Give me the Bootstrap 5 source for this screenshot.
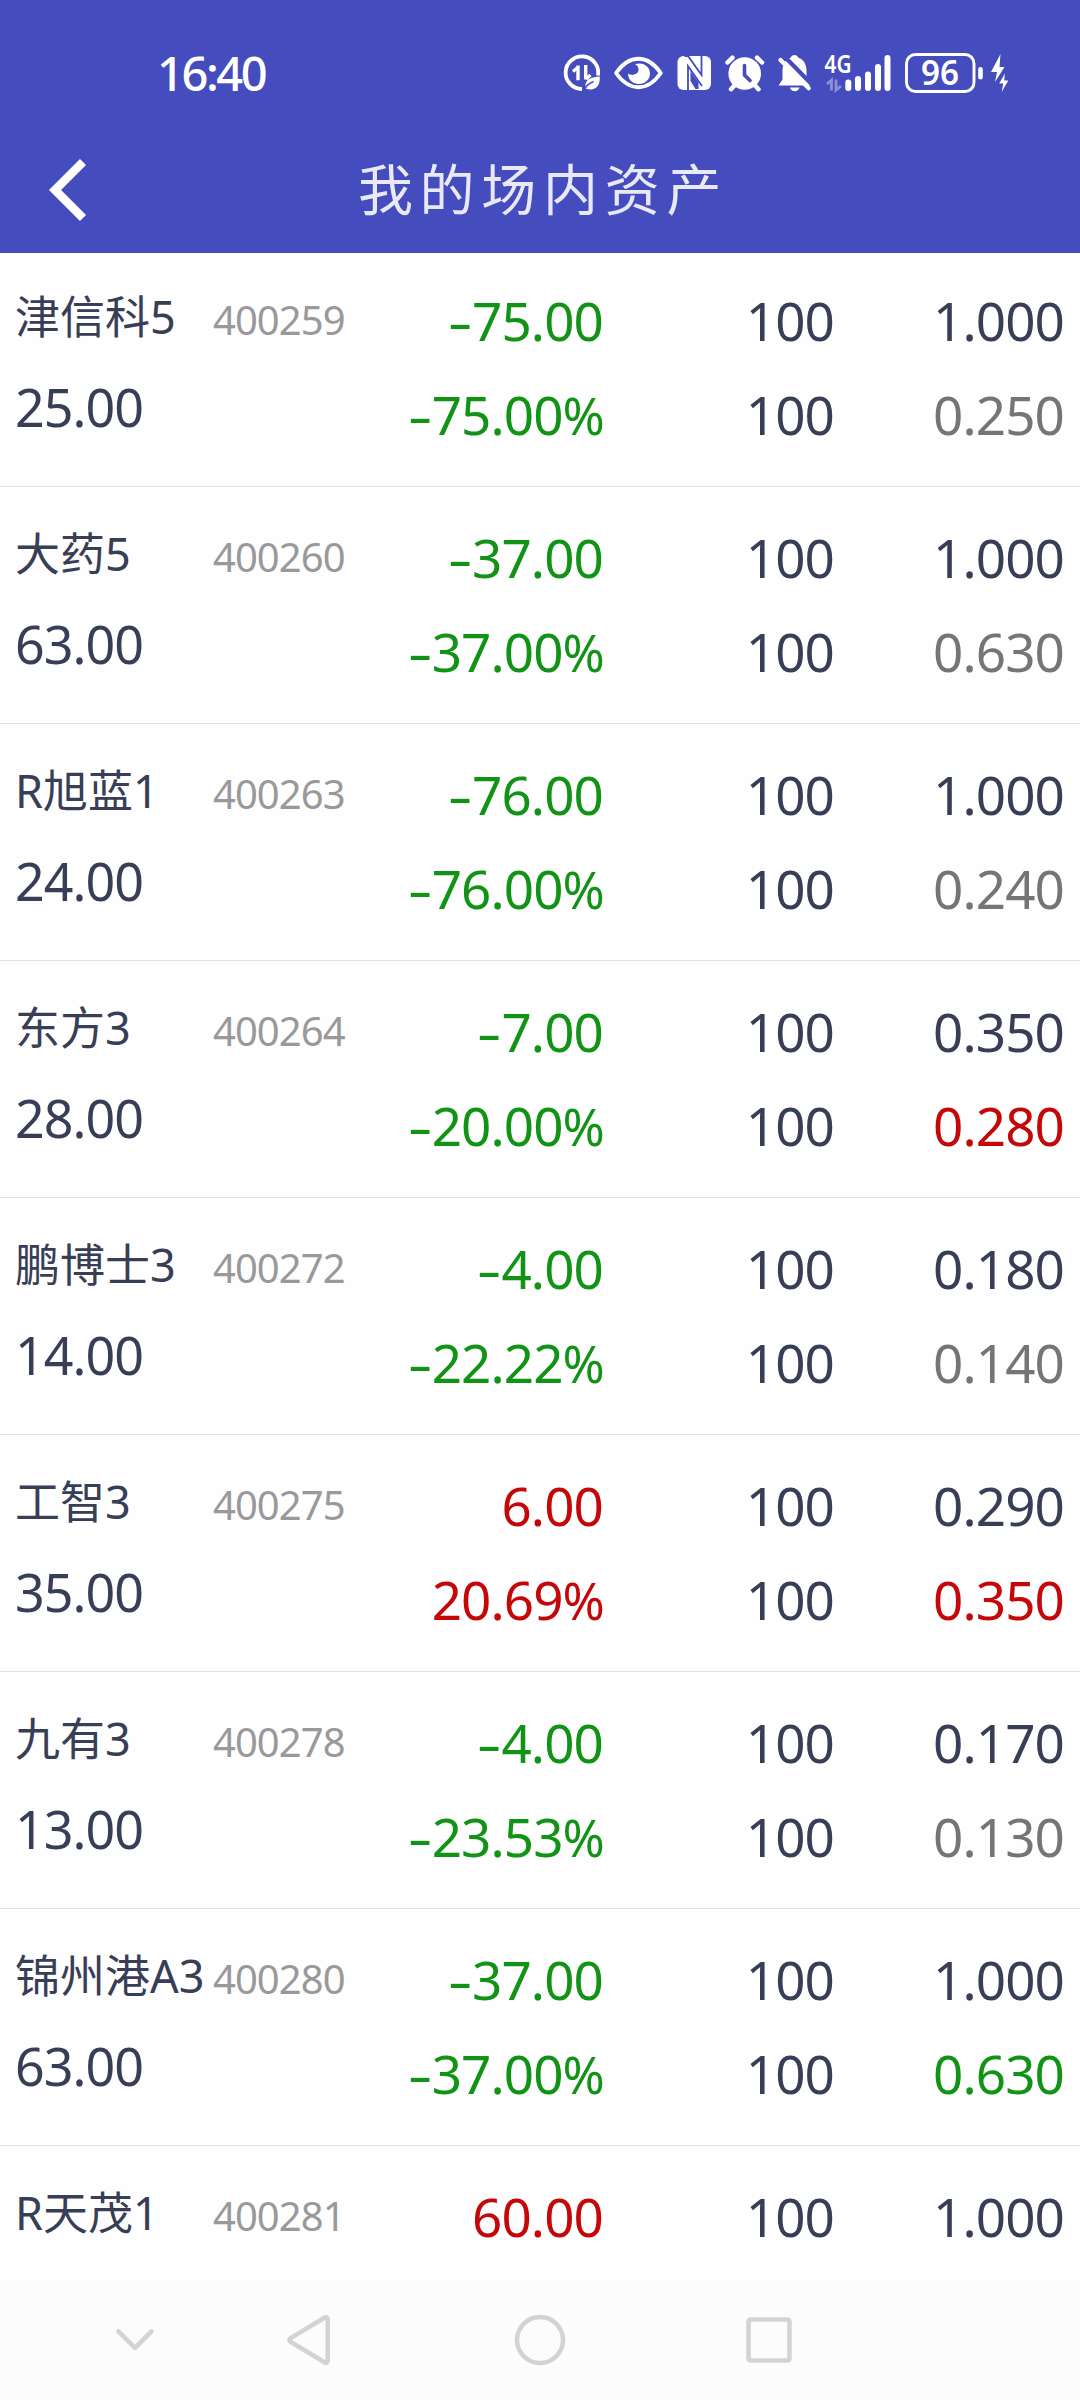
<!DOCTYPE html>
<html lang="zh-CN">
<head>
<meta charset="utf-8">
<meta name="viewport" content="width=device-width, initial-scale=1">
<title>我的场内资产</title>
<link href="https://cdn.jsdelivr.net/npm/bootstrap@5.3.0/dist/css/bootstrap.min.css" rel="stylesheet">
<style>
  body { font-family: "Noto Sans", "Noto Sans CJK SC", sans-serif; color: #383e55; background: #fefefe; }
  .screen { width: 1080px; height: 2400px; }
  .topbar { height: 253px; background: #444cbe; z-index: 1; }
  .status { height: 96px; padding: 0 66px 0 157px; }
  .clock { font-size: 47px; font-weight: 500; letter-spacing: -2.4px; line-height: 96px; margin-top: 25px; height: 71px; }
  .icons { height: 56px; margin-top: 40px; }
  .titlebar { height: 157px; padding-top: 30px; }
  .back { width: 120px; }
  .title { font-family: "Noto Sans CJK SC", sans-serif; font-size: 55px; letter-spacing: 6.7px; color: #e9e9f6; line-height: 120px; padding-left: 6px; margin-top: -7px !important; }
  .holdings { margin-top: -3px; }
  .holding { height: 237px; padding: 24px 15px 0 15px; border-bottom: 1px solid #e2e2e2; }
  .c-name { width: 335px; margin-top: -3px; }
  .c-gain { width: 253px; }
  .c-qty { width: 231px; }
  .c-price { width: 230px; }
  .n-row { height: 90px; line-height: 92px; }
  .n-name { width: 198px; font-size: 45px; white-space: nowrap; }
  .n-code { font-size: 40px; letter-spacing: -.95px; color: #999; margin-top: 3px; }
  .n-value { font-size: 52px; letter-spacing: -.95px; line-height: 92px; }
  .fig { font-size: 53px; letter-spacing: -.9px; line-height: 94px; height: 94px; }
  .down { color: #119316; }
  .up { color: #c4080a; }
  .flat { color: #757575; }
  .neg { display: inline-block; width: 25px; text-align: center; transform: scaleX(1.45); }
  .pct { font-size: .96em; margin-right: -1px; }
  .sysnav { height: 120px; background: #fcfcfc; z-index: 1; }
</style>
<script src="https://cdn.jsdelivr.net/npm/bootstrap@5.3.0/dist/js/bootstrap.bundle.min.js"></script>
</head>
<body>
<div class="screen d-flex flex-column overflow-hidden">
  <header class="topbar flex-shrink-0 position-relative text-white">
    <div class="status d-flex justify-content-between">
      <div class="clock">16:40</div>
      <div class="icons d-flex" aria-hidden="true">
        <!-- data saver -->
        <svg width="48" height="56" viewBox="560 40 48 56" fill="none" stroke="#fff">
          <path d="M598 75.500A16.300 16.300 0 1 0 582 89" stroke-width="3.800"/>
          <path d="M573 71.500l4.500-3.700M586 79l4.500-4" stroke-width="3.200"/>
          <path d="M578 65.500v14.800M585.700 65v14.500" stroke-width="3.400"/>
          <path d="M599.700 76.500c-8 .5-14.500 2.500-14.300 9.500 0 1 .3 2 .7 2.700 8.500 2.800 14.500-2 13.600-12.200z" fill="#fff" stroke="none"/>
          <path d="M583.500 91c2-4.500 5-7.500 10-9.500" stroke="#444cbe" stroke-width="1.600"/>
        </svg>
        <!-- eye comfort -->
        <svg width="62" height="56" viewBox="608 40 62 56">
          <path d="M616 73c13.500-19 31.500-19 44.800 0-13.300 19-31.300 19-44.800 0z" fill="none" stroke="#fff" stroke-width="3.800" stroke-linejoin="round"/>
          <path d="M635 64.300c8-2.800 15 2.200 15 9.200 0 6-5 10.500-11 10.500-6.500 0-11-4.500-11-10.500 3 2.500 9.500 1.700 10.500-3 .5-2.700-1-5-3.500-6.200z" fill="#fff"/>
        </svg>
        <!-- NFC -->
        <svg width="50" height="56" viewBox="670 40 50 56">
          <rect x="677.500" y="56" width="33.500" height="34" rx="6" fill="#fff"/>
          <path d="M684.500 56h3.500l13.500 19V56M688 90V66l14 20" fill="none" stroke="#444cbe" stroke-width="1.800"/>
          <path d="M690.500 71l8 11.500V89h-3l-5-8z" fill="#444cbe"/>
        </svg>
        <!-- alarm -->
        <svg width="52" height="56" viewBox="720 40 52 56" stroke-linecap="round">
          <circle cx="744.700" cy="73.500" r="16.300" fill="#fff"/>
          <path d="M727.500 62.500l5-4.800M762 62.500l-5-4.800M734 86l-3 3.200M755.500 86l3 3.200" stroke="#fff" stroke-width="4.500"/>
          <path d="M744.500 65.500V75l5.500 5.500" fill="none" stroke="#444cbe" stroke-width="3.600"/>
        </svg>
        <!-- muted bell -->
        <svg width="48" height="56" viewBox="772 40 48 56" stroke-linecap="round">
          <path d="M778.500 85.500l4-6V71c0-7.500 3.500-12 8.500-13.500 0-3.500 7-3.500 7 0 5 1.500 8.500 6 8.500 13.500v8l4 6.500z" fill="#fff"/>
          <path d="M790 87.500h9.500c-1 5-8.500 5-9.500 0z" fill="#fff"/>
          <path d="M784 56l27.500 28" stroke="#444cbe" stroke-width="4.200"/>
          <path d="M780.500 60l28.200 28.200" stroke="#fff" stroke-width="4.200"/>
        </svg>
        <!-- mobile signal -->
        <svg width="80" height="56" viewBox="820 40 80 56" fill="#fff">
          <text x="824.500" y="73" font-size="25" font-weight="600" textLength="27" lengthAdjust="spacingAndGlyphs">4G</text>
          <path d="M827 84l4.500-4v10.500M836 79.500V90l5-4" fill="none" stroke="#8b90d8" stroke-width="2.800"/>
          <g stroke="#fff" stroke-width="6" stroke-linecap="round">
            <path d="M848.300 82.500v5.500M858 79v9M868 74.500V88M878 67v21M887.500 58v30"/>
          </g>
        </svg>
        <!-- battery -->
        <svg width="86" height="56" viewBox="900 40 86 56" fill="#fff">
          <rect x="906.500" y="54.500" width="67.500" height="37" rx="9" fill="none" stroke="#fff" stroke-width="2.900"/>
          <rect x="978.200" y="67" width="4.600" height="12.500" rx="2.300"/>
          <text x="921" y="85" font-size="34" font-weight="600" textLength="38" lengthAdjust="spacingAndGlyphs">96</text>
        </svg>
        <!-- charging -->
        <svg width="28" height="56" viewBox="986 40 28 56" fill="#fff">
          <path d="M1000.500 54l-9.500 18h6l-2 10 9.500-15h-5z"/>
          <path d="M1004.800 73.500l-5.600 10h4l-1.500 8.500 6.600-11.500h-4z"/>
        </svg>
      </div>
    </div>
    <div class="titlebar d-flex align-items-center">
      <div class="back">
        <svg class="d-block" width="120" height="80" viewBox="0 150 120 80" aria-hidden="true"><path d="M83 162L55 190l28 28" fill="none" stroke="#fff" stroke-width="8.500"/></svg>
      </div>
      <h1 class="title flex-grow-1 text-center fw-normal m-0">我的场内资产</h1>
      <div class="back"></div>
    </div>
  </header>

  <main class="holdings flex-grow-1 overflow-hidden">
    <div class="holding d-flex">
      <div class="c-name"><div class="n-row d-flex"><span class="n-name">津信科5</span><span class="n-code">400259</span></div><div class="n-value">25.00</div></div>
      <div class="c-gain text-end down"><div class="fig"><span class="neg">-</span>75.00</div><div class="fig"><span class="neg">-</span>75.00<span class="pct">%</span></div></div>
      <div class="c-qty text-end"><div class="fig">100</div><div class="fig">100</div></div>
      <div class="c-price text-end"><div class="fig">1.000</div><div class="fig flat">0.250</div></div>
    </div>
    <div class="holding d-flex">
      <div class="c-name"><div class="n-row d-flex"><span class="n-name">大药5</span><span class="n-code">400260</span></div><div class="n-value">63.00</div></div>
      <div class="c-gain text-end down"><div class="fig"><span class="neg">-</span>37.00</div><div class="fig"><span class="neg">-</span>37.00<span class="pct">%</span></div></div>
      <div class="c-qty text-end"><div class="fig">100</div><div class="fig">100</div></div>
      <div class="c-price text-end"><div class="fig">1.000</div><div class="fig flat">0.630</div></div>
    </div>
    <div class="holding d-flex">
      <div class="c-name"><div class="n-row d-flex"><span class="n-name">R旭蓝1</span><span class="n-code">400263</span></div><div class="n-value">24.00</div></div>
      <div class="c-gain text-end down"><div class="fig"><span class="neg">-</span>76.00</div><div class="fig"><span class="neg">-</span>76.00<span class="pct">%</span></div></div>
      <div class="c-qty text-end"><div class="fig">100</div><div class="fig">100</div></div>
      <div class="c-price text-end"><div class="fig">1.000</div><div class="fig flat">0.240</div></div>
    </div>
    <div class="holding d-flex">
      <div class="c-name"><div class="n-row d-flex"><span class="n-name">东方3</span><span class="n-code">400264</span></div><div class="n-value">28.00</div></div>
      <div class="c-gain text-end down"><div class="fig"><span class="neg">-</span>7.00</div><div class="fig"><span class="neg">-</span>20.00<span class="pct">%</span></div></div>
      <div class="c-qty text-end"><div class="fig">100</div><div class="fig">100</div></div>
      <div class="c-price text-end"><div class="fig">0.350</div><div class="fig up">0.280</div></div>
    </div>
    <div class="holding d-flex">
      <div class="c-name"><div class="n-row d-flex"><span class="n-name">鹏博士3</span><span class="n-code">400272</span></div><div class="n-value">14.00</div></div>
      <div class="c-gain text-end down"><div class="fig"><span class="neg">-</span>4.00</div><div class="fig"><span class="neg">-</span>22.22<span class="pct">%</span></div></div>
      <div class="c-qty text-end"><div class="fig">100</div><div class="fig">100</div></div>
      <div class="c-price text-end"><div class="fig">0.180</div><div class="fig flat">0.140</div></div>
    </div>
    <div class="holding d-flex">
      <div class="c-name"><div class="n-row d-flex"><span class="n-name">工智3</span><span class="n-code">400275</span></div><div class="n-value">35.00</div></div>
      <div class="c-gain text-end up"><div class="fig">6.00</div><div class="fig">20.69<span class="pct">%</span></div></div>
      <div class="c-qty text-end"><div class="fig">100</div><div class="fig">100</div></div>
      <div class="c-price text-end"><div class="fig">0.290</div><div class="fig up">0.350</div></div>
    </div>
    <div class="holding d-flex">
      <div class="c-name"><div class="n-row d-flex"><span class="n-name">九有3</span><span class="n-code">400278</span></div><div class="n-value">13.00</div></div>
      <div class="c-gain text-end down"><div class="fig"><span class="neg">-</span>4.00</div><div class="fig"><span class="neg">-</span>23.53<span class="pct">%</span></div></div>
      <div class="c-qty text-end"><div class="fig">100</div><div class="fig">100</div></div>
      <div class="c-price text-end"><div class="fig">0.170</div><div class="fig flat">0.130</div></div>
    </div>
    <div class="holding d-flex">
      <div class="c-name"><div class="n-row d-flex"><span class="n-name">锦州港A3</span><span class="n-code">400280</span></div><div class="n-value">63.00</div></div>
      <div class="c-gain text-end down"><div class="fig"><span class="neg">-</span>37.00</div><div class="fig"><span class="neg">-</span>37.00<span class="pct">%</span></div></div>
      <div class="c-qty text-end"><div class="fig">100</div><div class="fig">100</div></div>
      <div class="c-price text-end"><div class="fig">1.000</div><div class="fig down">0.630</div></div>
    </div>
    <div class="holding d-flex">
      <div class="c-name"><div class="n-row d-flex"><span class="n-name">R天茂1</span><span class="n-code">400281</span></div></div>
      <div class="c-gain text-end up"><div class="fig">60.00</div></div>
      <div class="c-qty text-end"><div class="fig">100</div></div>
      <div class="c-price text-end"><div class="fig">1.000</div></div>
    </div>
  </main>

  <nav class="sysnav flex-shrink-0 position-relative" aria-label="系统导航">
    <svg class="d-block" width="1080" height="120" viewBox="0 2280 1080 120" fill="none" stroke="#d3d3d3" stroke-width="4.500" stroke-linecap="round" stroke-linejoin="round">
      <path d="M118.500 2331.300l16.500 16.500 16.500-16.500"/>
      <path d="M324.500 2317.700c1.500-1 3.200-.3 3.200 1.500v41.600c0 1.800-1.700 2.500-3.200 1.500l-34-20.500c-1.600-1-1.600-2.600 0-3.600z"/>
      <circle cx="540" cy="2340" r="23"/>
      <rect x="748.500" y="2319.500" width="41" height="41" rx="2"/>
    </svg>
  </nav>
</div>
</body>
</html>
